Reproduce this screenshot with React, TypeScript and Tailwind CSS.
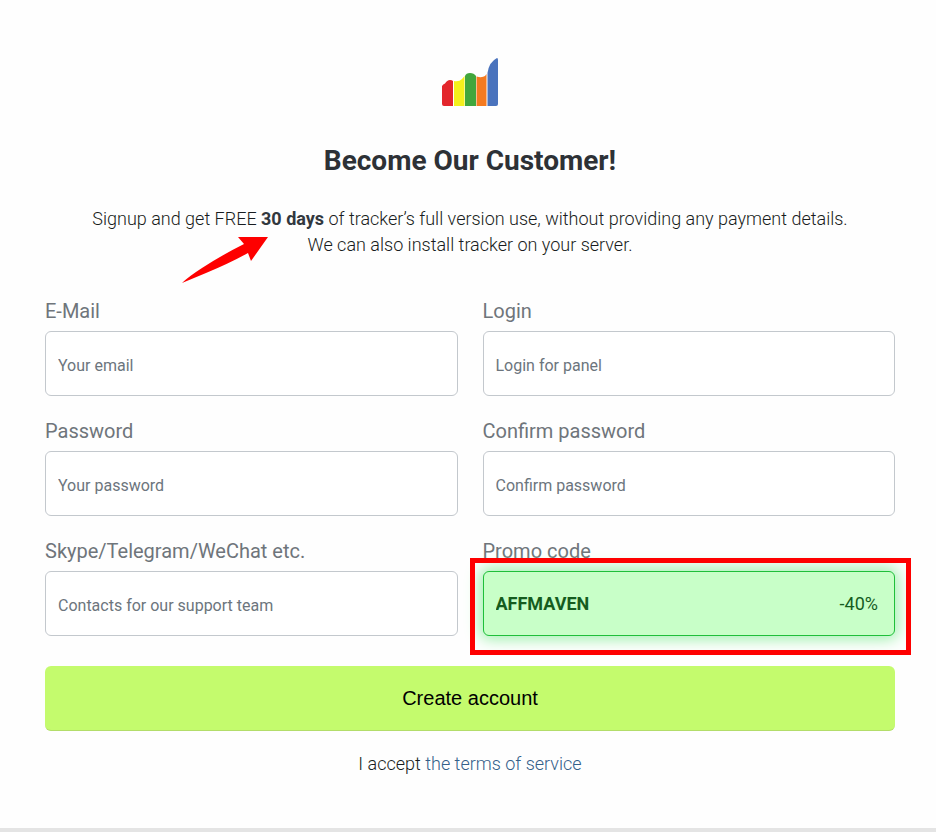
import type { InputHTMLAttributes } from "react";

type FieldProps = InputHTMLAttributes<HTMLInputElement> & {
    id: string;
    label: string;
};

function Logo() {
    return (
        <svg viewBox="0 0 56 48" className="h-12 w-14" role="img" aria-label="Tracker logo">
            <path fill="#e3262c" d="M0 28 Q1 26 3 25.500 Q5 22 8 22 Q10 22 11 23 V48 H2 Q0 48 0 46 Z" />
            <path fill="#f4f01c" d="M12 23 Q17 24 20 21 L22.500 18 V48 H12 Z" />
            <path fill="#41a63c" d="M23 18 Q24 15 28 15 Q32 15 34 18 V48 H23 Z" />
            <path fill="#f47a20" d="M34.500 18.500 Q40 20 43 18 L44.500 16 V48 H34.500 Z" />
            <path fill="#4a73bd" d="M45.500 15 Q47 4 55 0 Q56 0 56 2 V46 Q56 48 54 48 H45.500 Z" />
        </svg>
    );
}

function Field({ id, label, ...props }: FieldProps) {
    return (
        <div>
            <label htmlFor={id} className="block text-xl leading-10 text-[#6f757b]">{label}</label>
            <input
                id={id}
                className="block h-[65px] w-full rounded-md border border-[#c3c8cd] bg-white px-3 pt-1 text-base text-[#212529] placeholder:text-[#6c757d]"
                {...props}
            />
        </div>
    );
}

function PromoField() {
    return (
        <div>
            <label htmlFor="promo" className="block text-xl leading-10 text-[#6f757b]">Promo code</label>
            <div className="relative">
                <div className="flex h-[65px] items-center rounded-md border border-[#1fbf3a] bg-[#c8ffc8] px-3 text-[#155c1e] shadow-[0_0_15px_3px_#9af0a8]">
                    <input id="promo" defaultValue="AFFMAVEN" className="w-full min-w-0 flex-1 bg-transparent text-lg font-bold outline-none" />
                    <span className="pr-1 text-lg">-40%</span>
                </div>
                <div className="pointer-events-none absolute -top-[13px] -right-4 -bottom-[19px] -left-[13px] border-[5px] border-[#fe0000]" />
            </div>
        </div>
    );
}

function App() {
    return (
        <main className="bg-[#fefefe] pt-[58px] pr-[41px] pl-[45px] font-['Roboto',sans-serif] text-[#32383e]">
            <div className="flex justify-center">
                <Logo />
            </div>

            <h1 className="mt-9 text-center text-[28px] leading-[38px] font-bold text-[#2d3136]">Become Our Customer!</h1>

            <p className="mt-[26px] text-center text-lg leading-[26px] font-light text-[#181c20]">
                Signup and get FREE{" "}
                <strong className="relative font-bold text-[#32383e]">
                    30 days
                    <svg viewBox="0 0 86 47" className="absolute top-[29px] right-14 h-[47px] w-[86px]" aria-hidden="true">
                        <path fill="#fe0000" d="M0 46 Q6 40 20 31 Q40 18 62 7 L56 0 H86 L69 24 L66 16 Q48 26 24 36 Z" />
                    </svg>
                </strong>{" "}
                of tracker’s full version use, without providing any payment details.
                <br />
                We can also install tracker on your server.
            </p>

            <form className="mt-[33px]" onSubmit={(e) => e.preventDefault()}>
                <div className="grid grid-cols-2 gap-x-[25px] gap-y-[15px]">
                    <Field id="email" label="E-Mail" type="email" placeholder="Your email" />
                    <Field id="login" label="Login" type="text" placeholder="Login for panel" />
                    <Field id="password" label="Password" type="password" placeholder="Your password" />
                    <Field id="confirm" label="Confirm password" type="password" placeholder="Confirm password" />
                    <Field id="contacts" label="Skype/Telegram/WeChat etc." type="text" placeholder="Contacts for our support team" />
                    <PromoField />
                </div>

                <button type="submit" className="mt-[30px] h-[65px] w-full rounded-md border-b border-[#b3dd6a] bg-[#c4fb6d] font-['Liberation_Sans',Arial,sans-serif] text-xl text-black">
                    Create account
                </button>

                <p className="mt-5 text-center text-lg leading-[26px] font-light text-[#181c20]">
                    I accept <a href="#terms" className="text-[#34608a]">the terms of service</a>
                </p>
            </form>

            <div className="mt-[51px] -mr-[41px] -ml-[45px] h-1 bg-[#e4e4e4]" />
        </main>
    );
}

export default App;
